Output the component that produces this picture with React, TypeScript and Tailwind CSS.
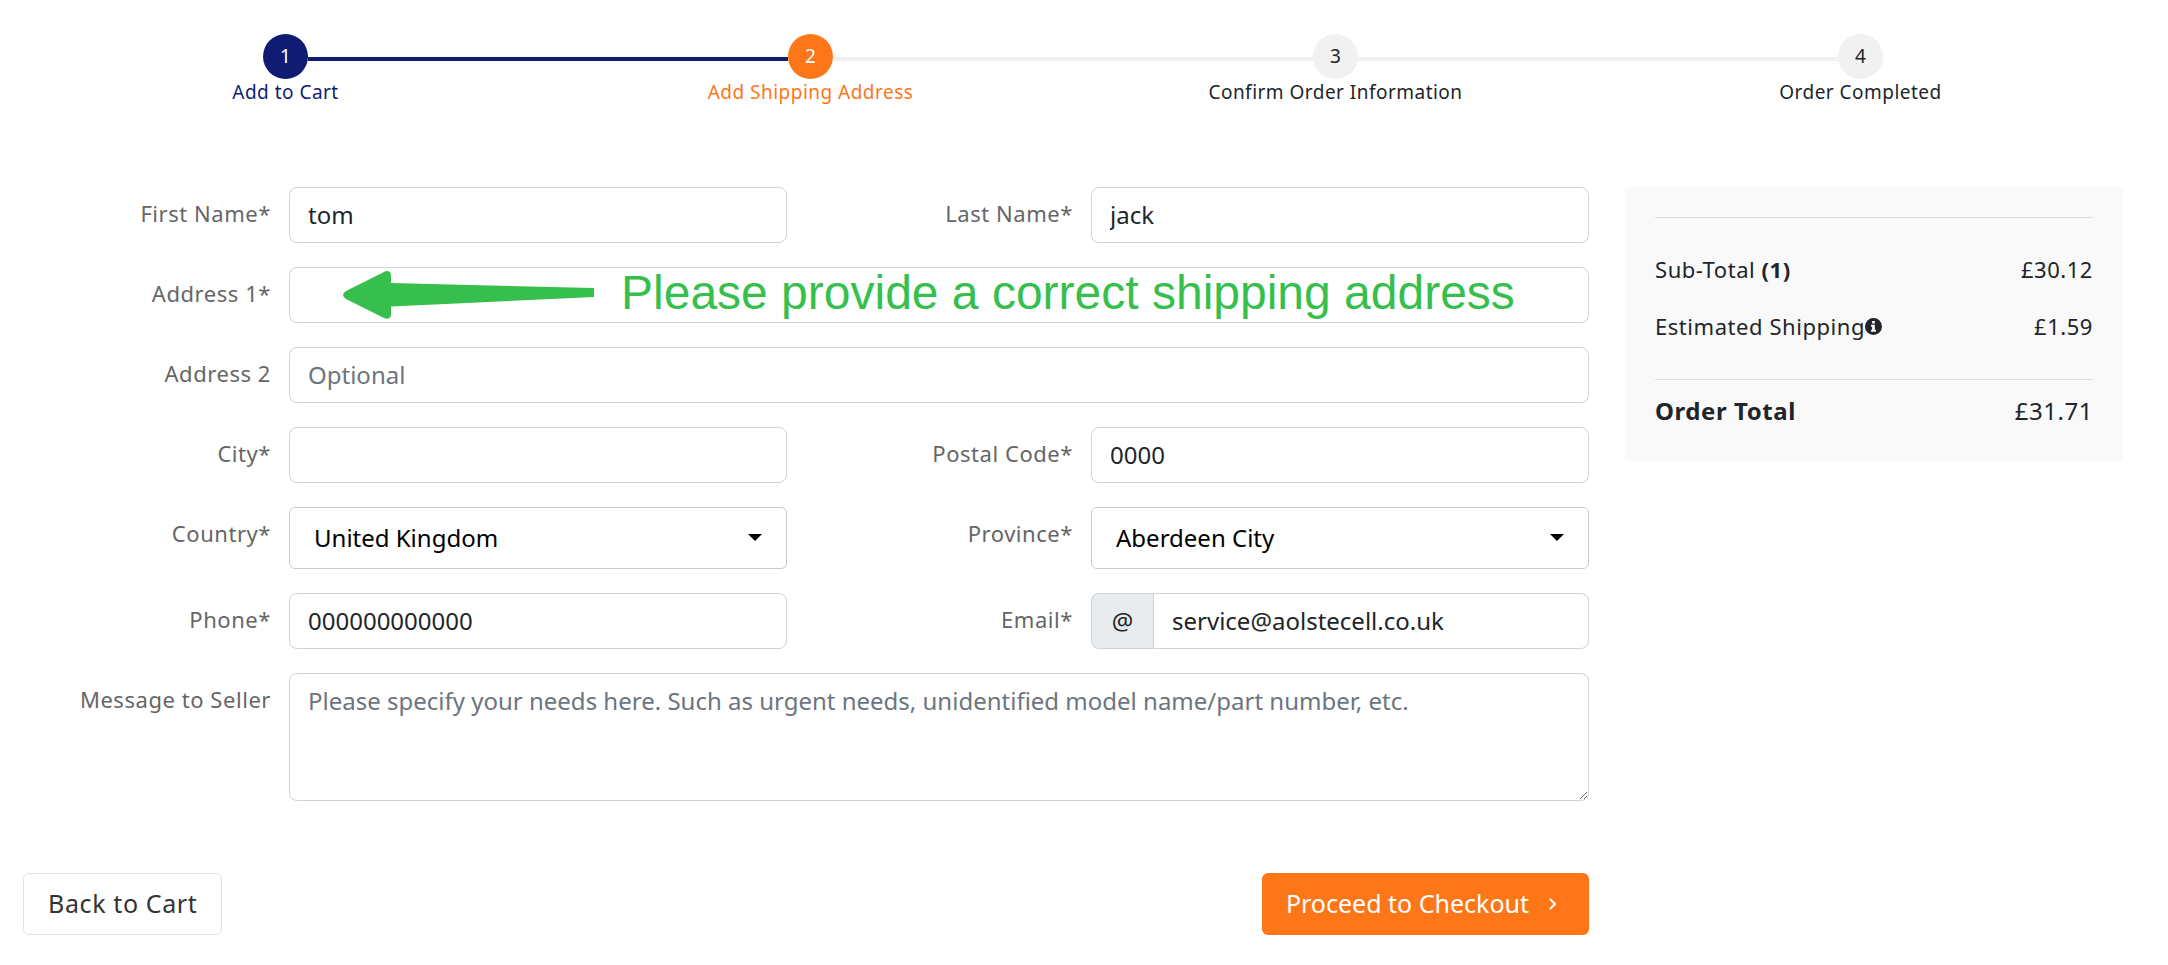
import { ReactNode } from "react"
import { clsx } from "clsx"

interface StepProps {
  number: number
  title: string
  state: "done" | "current" | "upcoming"
}

interface FieldProps {
  id: string
  label: string
  second?: boolean
  wide?: boolean
  children: ReactNode
}

const steps: StepProps[] = [
  { number: 1, title: "Add to Cart", state: "done" },
  { number: 2, title: "Add Shipping Address", state: "current" },
  { number: 3, title: "Confirm Order Information", state: "upcoming" },
  { number: 4, title: "Order Completed", state: "upcoming" },
]

const control =
  "block w-full rounded-lg border border-[#ced4da] bg-white px-[18px] py-[9px] text-2xl leading-9 text-[#212529] placeholder:text-[#6c757d] placeholder:opacity-100"

const Step = ({ number, title, state }: StepProps) => (
  <li
    className={clsx(
      "flex flex-col items-center",
      state === "done" && "text-[#101c72]",
      state === "current" && "text-[#fd7618]"
    )}
  >
    <div className="flex w-full items-center">
      <span
        className={clsx(
          "mt-1 h-1 flex-1",
          number === 1 && "bg-transparent",
          state === "current" && "bg-[#101c72]",
          state === "upcoming" && "bg-[#f1f1f1]"
        )}
      />
      <span
        className={clsx(
          "flex size-[45px] items-center justify-center rounded-full text-[19px]",
          state === "done" && "bg-[#101c72] text-white",
          state === "current" && "bg-[#fd7618] text-white",
          state === "upcoming" && "bg-[#f1f1f1]"
        )}
      >
        {number}
      </span>
      <span
        className={clsx(
          "mt-1 h-1 flex-1",
          state === "done" && "bg-[#101c72]",
          state !== "done" && number < 4 && "bg-[#f1f1f1]"
        )}
      />
    </div>
    <span className="text-[19px] leading-[26px] tracking-wide">{title}</span>
  </li>
)

const Field = ({ id, label, second, wide, children }: FieldProps) => (
  <>
    <label
      htmlFor={id}
      className={clsx(
        "text-right text-[22px] leading-[52px] tracking-wide text-[#666]",
        second && "pl-[18px]"
      )}
    >
      {label}
    </label>
    <div className={clsx("relative", wide && "col-span-3")}>{children}</div>
  </>
)

const Select = ({ id, options }: { id: string; options: string[] }) => (
  <>
    <select
      id={id}
      className="block h-[62px] w-full appearance-none rounded-md border border-[#ccc] bg-white px-6 text-2xl text-black"
    >
      {options.map((option) => (
        <option key={option}>{option}</option>
      ))}
    </select>
    <svg
      viewBox="0 0 14 7"
      className="pointer-events-none absolute top-[27px] right-[25px] h-[7px] w-[14px]"
    >
      <path d="M0 0h14L7 7z" />
    </svg>
  </>
)

const AddressNote = () => (
  <div className="pointer-events-none absolute inset-0 flex items-center gap-[27px] pl-[54px] text-[#36bf4c]">
    <svg viewBox="0 0 251 48" className="h-12 w-[251px]" fill="currentColor">
      <path d="M251 17 48 12V4C48 0 44-1 41 1L3 20Q-3 24 3 28L41 47C44 49 48 47 48 44V35.500L251 26Z" />
    </svg>
    <p className="pb-1 font-['Liberation_Sans',sans-serif] text-5xl whitespace-nowrap">
      Please provide a correct shipping address
    </p>
  </div>
)

const InfoIcon = () => (
  <svg viewBox="0 0 16 16" className="size-[17px]" fill="currentColor">
    <path
      fillRule="evenodd"
      d="M8 0a8 8 0 1 0 0 16A8 8 0 0 0 8 0ZM6.700 2.800h2.600v2.400H6.700ZM5.700 6.400h3.600v4.600h1v2H5.700v-2h1V8.300h-1Z"
    />
  </svg>
)

const Summary = () => (
  <aside className="self-start rounded-md bg-[#f9f9f9] px-[30px] pt-[30px] pb-[22px]">
    <dl className="border-t border-[#dedede] pt-[23px] text-[22px] leading-[57px] tracking-wide">
      <div className="flex justify-between">
        <dt>
          Sub-Total <b>(1)</b>
        </dt>
        <dd>£30.12</dd>
      </div>
      <div className="flex justify-between">
        <dt className="flex items-center">
          Estimated Shipping
          <InfoIcon />
        </dt>
        <dd>£1.59</dd>
      </div>
      <div className="mt-6 flex justify-between border-t border-[#dedede] pt-[2px] text-2xl leading-[57px]">
        <dt className="font-bold">Order Total</dt>
        <dd>£31.71</dd>
      </div>
    </dl>
  </aside>
)

export default function App() {
  return (
    <main className="bg-white pt-[34px] pr-[45px] pb-[30px] pl-[23px] font-['Noto_Sans',sans-serif] text-[#212529]">
      <ol className="grid grid-cols-4">
        {steps.map((step) => (
          <Step key={step.number} {...step} />
        ))}
      </ol>

      <div className="mt-[82px] grid grid-cols-4 gap-9">
        <form className="col-span-3" onSubmit={(e) => e.preventDefault()}>
          <div className="grid grid-cols-[248fr_498fr_268fr_498fr] gap-x-[18px] gap-y-6">
            <Field id="first-name" label="First Name*">
              <input id="first-name" className={control} defaultValue="tom" />
            </Field>
            <Field id="last-name" label="Last Name*" second>
              <input id="last-name" className={control} defaultValue="jack" />
            </Field>
            <Field id="address-1" label="Address 1*" wide>
              <input id="address-1" className={control} />
              <AddressNote />
            </Field>
            <Field id="address-2" label="Address 2" wide>
              <input id="address-2" className={control} placeholder="Optional" />
            </Field>
            <Field id="city" label="City*">
              <input id="city" className={control} />
            </Field>
            <Field id="postal-code" label="Postal Code*" second>
              <input id="postal-code" className={control} defaultValue="0000" />
            </Field>
            <Field id="country" label="Country*">
              <Select id="country" options={["United Kingdom"]} />
            </Field>
            <Field id="province" label="Province*" second>
              <Select id="province" options={["Aberdeen City"]} />
            </Field>
            <Field id="phone" label="Phone*">
              <input
                id="phone"
                type="tel"
                className={control}
                defaultValue="000000000000"
              />
            </Field>
            <Field id="email" label="Email*" second>
              <div className="flex">
                <span className="flex w-[62px] shrink-0 items-center justify-center rounded-l-lg border border-r-0 border-[#ced4da] bg-[#e9ecef] text-2xl">
                  @
                </span>
                <input
                  id="email"
                  type="email"
                  className={clsx(control, "rounded-l-none")}
                  defaultValue="service@aolstecell.co.uk"
                />
              </div>
            </Field>
            <Field id="message" label="Message to Seller" wide>
              <textarea
                id="message"
                rows={3}
                className={control}
                placeholder="Please specify your needs here. Such as urgent needs, unidentified model name/part number, etc."
              />
            </Field>
          </div>

          <div className="mt-[72px] flex justify-between">
            <button
              type="button"
              className="h-[62px] rounded-md border border-[#e1e1e1] px-6 text-[25px] tracking-wide text-[#333]"
            >
              Back to Cart
            </button>
            <button
              type="submit"
              className="flex h-[62px] items-center gap-5 rounded-md bg-[#fd7618] pr-8 pl-6 text-[25px] text-white"
            >
              Proceed to Checkout
              <svg
                viewBox="0 0 8 12"
                className="h-3 w-2"
                fill="none"
                stroke="currentColor"
                strokeWidth="2"
              >
                <path d="m1 1 5 5-5 5" />
              </svg>
            </button>
          </div>
        </form>

        <Summary />
      </div>
    </main>
  )
}
